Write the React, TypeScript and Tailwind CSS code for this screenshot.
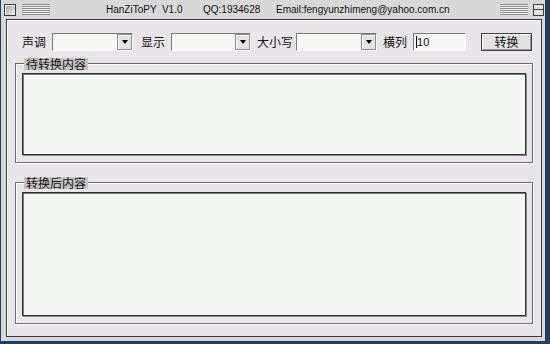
import React from 'react';

const cjk = '"Noto Sans CJK SC", "DejaVu Sans", sans-serif';
const latin = '"Liberation Sans", Arial, sans-serif';

function Stripes({ className }: { className?: string }) {
  return (
    <div
      className={
        'h-[11px] bg-[repeating-linear-gradient(to_bottom,#8a8a8a_0px,#8a8a8a_1px,#f2f2f2_1px,#f2f2f2_2px)] ' +
        (className ?? '')
      }
    />
  );
}

function Select({ width }: { width: string }) {
  return (
    <div
      className={
        'h-[18px] flex border border-t-[#7a7a7a] border-l-[#7a7a7a] border-r-[#ffffff] border-b-[#ffffff] bg-[#f6f7f4] ' +
        width
      }
    >
      <div className="flex-1" />
      <div className="w-[15px] h-full flex items-center justify-center bg-[#e4e4e4] border border-[#8c8c8c] shadow-[inset_1px_1px_0_#ffffff]">
        <div className="w-0 h-0 border-l-[3.5px] border-r-[3.5px] border-t-[4px] border-l-transparent border-r-transparent border-t-black" />
      </div>
    </div>
  );
}

function Label({ text, className }: { text: string; className?: string }) {
  return (
    <span className={'text-[12px] leading-none text-[#111] ' + (className ?? '')} style={{ fontFamily: cjk }}>
      {text}
    </span>
  );
}

function GroupBox({ title, height, className }: { title: string; height: string; className?: string }) {
  return (
    <div
      className={
        'relative mx-[8px] border border-[#6c6c6c] shadow-[inset_1px_1px_0_#ffffff,1px_1px_0_#ffffff] pt-[9px] px-[6px] pb-[7px] flex ' +
        height +
        ' ' +
        (className ?? '')
      }
    >
      <span
        className="absolute -top-[6px] left-[8px] h-[12px] px-[2px] bg-[#c4c4c4] text-[12px] leading-[12px] text-[#111]"
        style={{ fontFamily: cjk }}
      >
        {title}
      </span>
      <div className="flex-1 bg-[#f4f6f3] border border-[#303030] shadow-[inset_1px_1px_0_#7a7a7a,inset_-1px_-1px_0_#ffffff,1px_1px_0_#8a8a8a]" />
    </div>
  );
}

export default function App() {
  return (
    <div className="w-[550px] h-[344px] bg-[#223e60] pl-[1px] overflow-hidden">
      <div className="w-[544px] h-[341px] bg-[#d8d8d8] flex flex-col">
        {/* Title bar */}
        <div className="h-[19px] flex items-center shrink-0">
          <div className="ml-[3px] w-[12px] h-[12px] border border-[#3c3c3c] bg-[linear-gradient(135deg,#a0a0a0,#f4f4f4)] shadow-[inset_1px_1px_0_#ffffff]" />
          <Stripes className="ml-[6px] w-[28px]" />
          <div className="flex-1 flex items-center text-[10px] leading-none text-[#111] whitespace-pre" style={{ fontFamily: latin }}>
            <span className="ml-[56px] w-[97px]">HanZiToPY  V1.0</span>
            <span className="w-[73px]">QQ:1934628</span>
            <span>Email:fengyunzhimeng@yahoo.com.cn</span>
          </div>
          <Stripes className="w-[28px]" />
          <div className="ml-[5px] mr-[1px] w-[11px] h-[12px] border border-[#3c3c3c] bg-[#e6e6e6] flex items-center">
            <div className="w-full h-[1px] bg-[#3c3c3c]" />
          </div>
        </div>

        {/* Body */}
        <div className="flex-1 ml-[5px] mr-[3px] mb-[4px] border border-[#3a3a3a] bg-[#e8e6e8] shadow-[inset_1px_1px_0_#ffffff] flex flex-col">
          <div className="flex items-center pt-[13px] pl-[15px] h-[31px] shrink-0">
            <Label text="声调" />
            <div className="ml-[6px]">
              <Select width="w-[81px]" />
            </div>
            <Label text="显示" className="ml-[8px]" />
            <div className="ml-[6px]">
              <Select width="w-[80px]" />
            </div>
            <Label text="大小写" className="ml-[6px]" />
            <div className="ml-[3px]">
              <Select width="w-[81px]" />
            </div>
            <Label text="横列" className="ml-[6px]" />
            <div className="ml-[6px] w-[53px] h-[18px] flex items-center border border-t-[#7a7a7a] border-l-[#7a7a7a] border-r-[#ffffff] border-b-[#ffffff] bg-[#f6f7f4] pl-[2px]">
              <div className="w-[1px] h-[12px] bg-black" />
              <span className="text-[11px] leading-none text-[#111]" style={{ fontFamily: latin }}>
                10
              </span>
            </div>
            <button
              className="ml-[15px] w-[51px] h-[18px] flex items-center justify-center border border-[#3e3e3e] bg-[#e2e2e2] shadow-[inset_1px_1px_0_#ffffff,inset_-1px_-1px_0_#9a9a9a]"
            >
              <Label text="转换" />
            </button>
          </div>

          <GroupBox title="待转换内容" height="h-[100px]" className="mt-[12px]" />
          <GroupBox title="转换后内容" height="h-[142px]" className="mt-[19px]" />
        </div>
      </div>
    </div>
  );
}
